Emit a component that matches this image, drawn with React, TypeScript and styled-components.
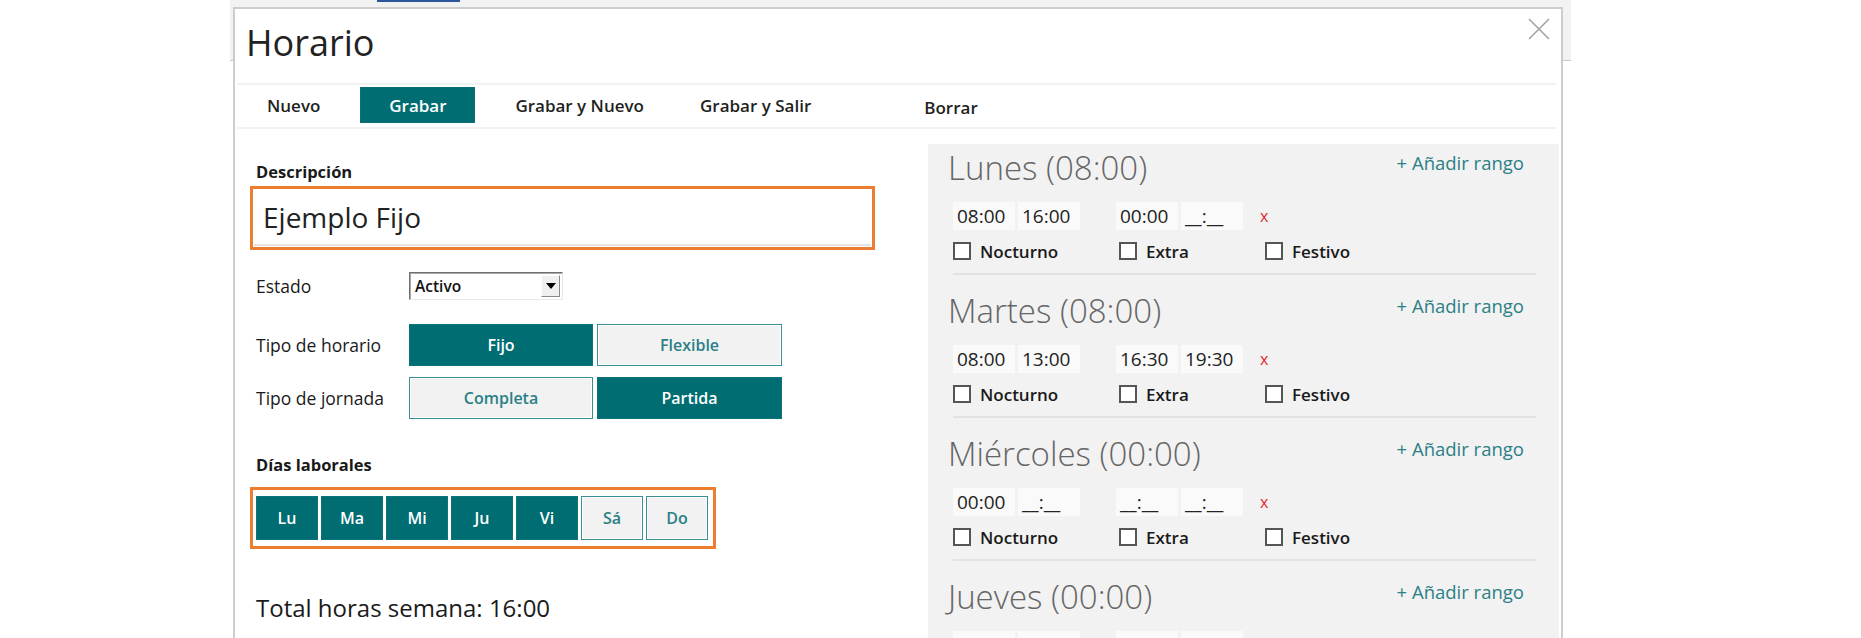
import React from "react";
import styled, { createGlobalStyle } from "styled-components";

const teal = "#006d72";
const tealText = "#2a8086";
const orange = "#ed7d31";

const GlobalStyle = createGlobalStyle`
  html, body {
    margin: 0;
    padding: 0;
    background: #fff;
    overflow: hidden;
  }
  body {
    font-family: "Open Sans", "Noto Sans", sans-serif;
    color: #222;
  }
  * { box-sizing: border-box; }
`;

const Stage = styled.div`
  position: relative;
  margin-left: 230px;
  width: 1341px;
  height: 638px;
  overflow: hidden;
`;

const PageBar = styled.div`
  height: 61px;
  background: #f2f2f2;
  border-bottom: 1px solid #c8c8c8;
`;

const PageTab = styled.div`
  margin-left: 147px;
  width: 83px;
  height: 2px;
  background: #2b579a;
`;

const Modal = styled.div`
  position: absolute;
  top: 7px;
  left: 3px;
  width: 1330px;
  height: 700px;
  background: #fff;
  border: 2px solid #cdcdcd;
  border-bottom: none;
`;

const Header = styled.div`
  display: flex;
  justify-content: space-between;
  align-items: flex-start;
  height: 74px;
  padding: 0 10px 0 11px;
`;

const Title = styled.h1`
  margin: 14px 0 0;
  font-size: 36px;
  line-height: 40px;
  font-weight: 400;
  color: #222;
`;

const CloseButton = styled.button`
  margin-top: 8px;
  width: 24px;
  height: 24px;
  padding: 0;
  border: none;
  background: none;
  cursor: pointer;
`;

const Toolbar = styled.div`
  display: flex;
  align-items: center;
  height: 46px;
  margin: 0 5px 0 2px;
  padding-left: 14px;
  border-top: 2px solid #f2f2f2;
  border-bottom: 2px solid #f2f2f2;
  gap: 24px;
`;

const ToolButton = styled.button<{ $active?: boolean; $spaced?: boolean }>`
  min-width: ${(p) => (p.$active ? "115px" : "0")};
  height: 36px;
  padding: 0 15px;
  margin-left: ${(p) => (p.$spaced ? "57px" : "0")};
  margin-top: ${(p) => (p.$spaced ? "3px" : "-2px")};
  border: 1px solid ${(p) => (p.$active ? "#0b6f74" : "transparent")};
  background: ${(p) => (p.$active ? teal : "transparent")};
  color: ${(p) => (p.$active ? "#fff" : "#1f1f1f")};
  font-family: inherit;
  font-size: 17px;
  font-weight: 600;
  white-space: nowrap;
  cursor: pointer;
`;

const Body = styled.div`
  display: flex;
  gap: 53px;
  padding: 0 2px 0 15px;
`;

const LeftColumn = styled.div`
  width: 625px;
  display: flex;
  flex-direction: column;
  align-items: flex-start;
`;

const SectionLabel = styled.div<{ $top: number }>`
  margin-top: ${(p) => p.$top}px;
  padding-left: 6px;
  font-size: 16.5px;
  line-height: 20px;
  font-weight: 700;
  color: #1a1a1a;
`;

const Highlight = styled.div`
  border: 3px solid ${orange};
  background: #fff;
`;

const DescriptionFrame = styled(Highlight)`
  margin-top: 4px;
  width: 625px;
  height: 64px;
  padding: 0 1px 1px;
`;

const TextInput = styled.div`
  height: 100%;
  padding-left: 9px;
  display: flex;
  align-items: center;
  border-bottom: 2px solid #e4e4e4;
  font-size: 28px;
  color: #222;
`;

const FormRow = styled.div<{ $top: number }>`
  display: flex;
  align-items: center;
  margin-top: ${(p) => p.$top}px;
`;

const FieldLabel = styled.div`
  width: 159px;
  padding-left: 6px;
  font-size: 17.5px;
  color: #1a1a1a;
`;

const Select = styled.div`
  display: flex;
  align-items: center;
  width: 154px;
  height: 28px;
  background: #fff;
  border: 1px solid;
  border-color: #707070 #e8e8e8 #e8e8e8 #707070;
  box-shadow: inset 1px 1px 0 #a8a8a8;
`;

const SelectValue = styled.div`
  flex: 1;
  padding-left: 5px;
  font-size: 15.5px;
  font-weight: 600;
  color: #111;
`;

const SelectArrow = styled.div`
  width: 19px;
  height: 22px;
  margin-right: 2px;
  display: flex;
  align-items: center;
  justify-content: center;
  background: #f0f0f0;
  border: 1px solid;
  border-color: #fff #8a8a8a #8a8a8a #fff;

  &::after {
    content: "";
    border-left: 5px solid transparent;
    border-right: 5px solid transparent;
    border-top: 6px solid #000;
  }
`;

const Segmented = styled.div`
  display: flex;
  gap: 4px;
`;

const ToggleButton = styled.button<{ $on: boolean; $w: number; $h: number }>`
  width: ${(p) => p.$w}px;
  height: ${(p) => p.$h}px;
  padding: 0;
  border: 1px solid ${(p) => (p.$on ? "#0d7378" : "#3b8e93")};
  box-shadow: ${(p) => (p.$on ? "none" : "inset 0 0 0 1px #fff")};
  background: ${(p) => (p.$on ? teal : "#f2f2f2")};
  color: ${(p) => (p.$on ? "#fff" : tealText)};
  font-family: inherit;
  font-size: 16px;
  font-weight: 600;
  cursor: pointer;
`;

const DaysFrame = styled(Highlight)`
  margin-top: 12px;
  display: flex;
  gap: 3px;
  padding: 6px 5px 6px 3px;
`;

const Total = styled.div`
  margin-top: 44px;
  padding-left: 6px;
  font-size: 24px;
  line-height: 30px;
  color: #1a1a1a;
`;

const RightPanel = styled.div`
  width: 631px;
  margin-top: 15px;
  padding-top: 4px;
  background: #f2f2f2;
  height: 600px;
`;

const DayBlock = styled.div`
  padding: 0 23px 16px 20px;
`;

const DayHead = styled.div`
  display: flex;
  justify-content: space-between;
  align-items: flex-start;
`;

const DayTitle = styled.div`
  font-size: 33px;
  line-height: 40px;
  font-weight: 300;
  color: #666;
`;

const AddRange = styled.a`
  margin-right: 12px;
  font-size: 18.5px;
  line-height: 30px;
  color: ${tealText};
  text-decoration: none;
  cursor: pointer;
`;

const TimeRow = styled.div`
  display: flex;
  align-items: center;
  margin: 14px 0 0 5px;
`;

const TimeGroup = styled.div`
  display: flex;
  gap: 3px;
  margin-right: 36px;

  &:nth-child(2) {
    margin-right: 17px;
  }
`;

const TimeBox = styled.div`
  width: 62px;
  height: 28px;
  padding-left: 4px;
  background: #fafafa;
  font-size: 19px;
  line-height: 28px;
  color: #222;
`;

const Remove = styled.span`
  font-size: 16px;
  color: #e3262f;
  cursor: pointer;
`;

const CheckRow = styled.div`
  display: grid;
  grid-template-columns: 166px 146px auto;
  margin: 10px 0 0 5px;
`;

const CheckItem = styled.label`
  display: flex;
  align-items: center;
  gap: 9px;
  height: 22px;
  font-size: 17px;
  font-weight: 600;
  color: #1a1a1a;
`;

const CheckBox = styled.span`
  width: 18px;
  height: 18px;
  border: 2px solid #555;
  background: #fff;
`;

const Divider = styled.div`
  margin: 11px 0 0 5px;
  height: 2px;
  background: #e2e2e2;
`;

type Day = { name: string; total: string; ranges: [string, string, string, string] };

const days: Day[] = [
  { name: "Lunes", total: "08:00", ranges: ["08:00", "16:00", "00:00", "__:__"] },
  { name: "Martes", total: "08:00", ranges: ["08:00", "13:00", "16:30", "19:30"] },
  { name: "Miércoles", total: "00:00", ranges: ["00:00", "__:__", "__:__", "__:__"] },
  { name: "Jueves", total: "00:00", ranges: ["00:00", "__:__", "__:__", "__:__"] },
];

const weekDays = [
  { label: "Lu", on: true },
  { label: "Ma", on: true },
  { label: "Mi", on: true },
  { label: "Ju", on: true },
  { label: "Vi", on: true },
  { label: "Sá", on: false },
  { label: "Do", on: false },
];

function CloseIcon() {
  return (
    <svg width="24" height="24" viewBox="0 0 24 24">
      <path d="M2 2L22 22M22 2L2 22" stroke="#a3a3a3" strokeWidth="1.6" fill="none" />
    </svg>
  );
}

function DaySchedule({ day }: { day: Day }) {
  return (
    <DayBlock>
      <DayHead>
        <DayTitle>
          {day.name} ({day.total})
        </DayTitle>
        <AddRange>+ Añadir rango</AddRange>
      </DayHead>
      <TimeRow>
        <TimeGroup>
          <TimeBox>{day.ranges[0]}</TimeBox>
          <TimeBox>{day.ranges[1]}</TimeBox>
        </TimeGroup>
        <TimeGroup>
          <TimeBox>{day.ranges[2]}</TimeBox>
          <TimeBox>{day.ranges[3]}</TimeBox>
        </TimeGroup>
        <Remove>x</Remove>
      </TimeRow>
      <CheckRow>
        {["Nocturno", "Extra", "Festivo"].map((c) => (
          <CheckItem key={c}>
            <CheckBox />
            {c}
          </CheckItem>
        ))}
      </CheckRow>
      <Divider />
    </DayBlock>
  );
}

export default function App() {
  return (
    <>
      <GlobalStyle />
      <Stage>
        <PageBar>
          <PageTab />
        </PageBar>
        <Modal>
          <Header>
            <Title>Horario</Title>
            <CloseButton aria-label="Cerrar">
              <CloseIcon />
            </CloseButton>
          </Header>
          <Toolbar>
            <ToolButton>Nuevo</ToolButton>
            <ToolButton $active>Grabar</ToolButton>
            <ToolButton>Grabar y Nuevo</ToolButton>
            <ToolButton>Grabar y Salir</ToolButton>
            <ToolButton $spaced>Borrar</ToolButton>
          </Toolbar>
          <Body>
            <LeftColumn>
              <SectionLabel $top={33}>Descripción</SectionLabel>
              <DescriptionFrame>
                <TextInput>Ejemplo Fijo</TextInput>
              </DescriptionFrame>
              <FormRow $top={22}>
                <FieldLabel>Estado</FieldLabel>
                <Select>
                  <SelectValue>Activo</SelectValue>
                  <SelectArrow />
                </Select>
              </FormRow>
              <FormRow $top={24}>
                <FieldLabel>Tipo de horario</FieldLabel>
                <Segmented>
                  <ToggleButton $on $w={184} $h={42}>Fijo</ToggleButton>
                  <ToggleButton $on={false} $w={185} $h={42}>Flexible</ToggleButton>
                </Segmented>
              </FormRow>
              <FormRow $top={11}>
                <FieldLabel>Tipo de jornada</FieldLabel>
                <Segmented>
                  <ToggleButton $on={false} $w={184} $h={42}>Completa</ToggleButton>
                  <ToggleButton $on $w={185} $h={42}>Partida</ToggleButton>
                </Segmented>
              </FormRow>
              <SectionLabel $top={36}>Días laborales</SectionLabel>
              <DaysFrame>
                {weekDays.map((d) => (
                  <ToggleButton key={d.label} $on={d.on} $w={62} $h={44}>
                    {d.label}
                  </ToggleButton>
                ))}
              </DaysFrame>
              <Total>Total horas semana: 16:00</Total>
            </LeftColumn>
            <RightPanel>
              {days.map((d) => (
                <DaySchedule key={d.name} day={d} />
              ))}
            </RightPanel>
          </Body>
        </Modal>
      </Stage>
    </>
  );
}
